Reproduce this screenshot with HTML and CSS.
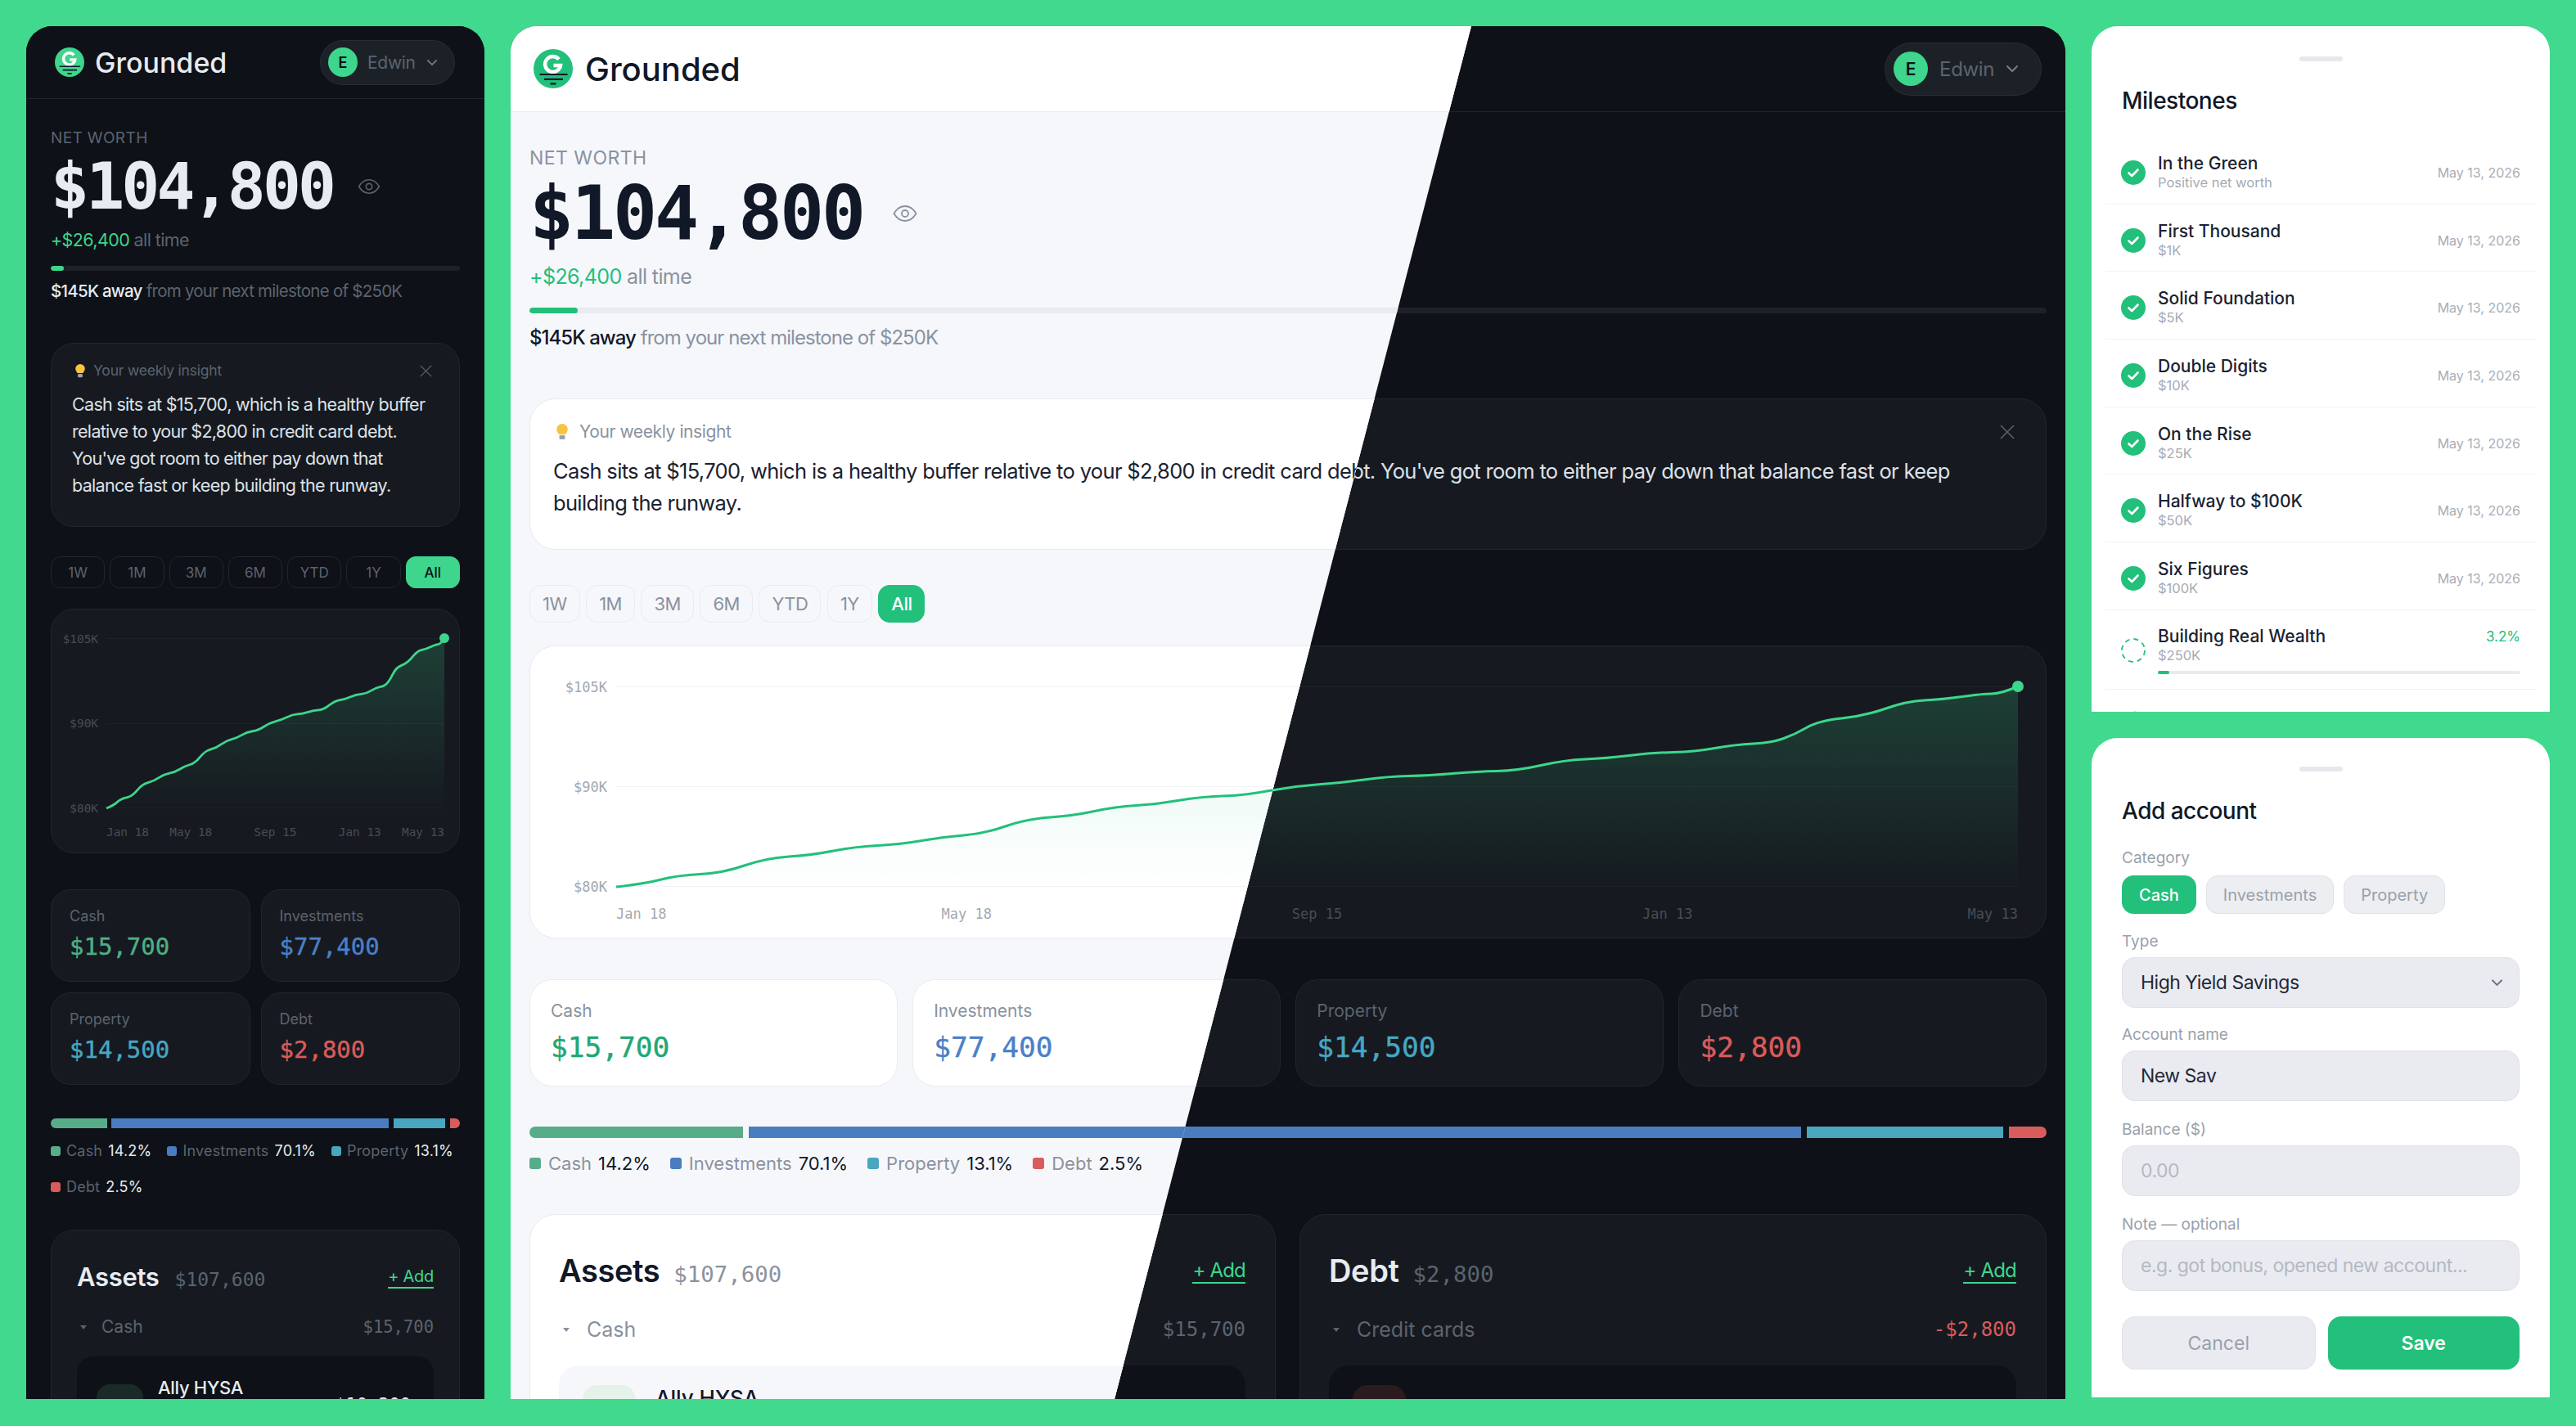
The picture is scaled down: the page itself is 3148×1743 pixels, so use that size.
FILE: index.html
```html
<!DOCTYPE html>
<html lang="en">
<head>
  <meta charset="UTF-8">
  <meta name="viewport" content="width=device-width, initial-scale=1.0">
  <title>Grounded</title>
  <link rel="stylesheet" href="styles.css">
</head>
<body>
  <svg class="defs" width="0" height="0" aria-hidden="true">
    <defs>
      <linearGradient id="fade-dark" x1="0" y1="0" x2="0" y2="1">
        <stop offset="0" stop-color="#3dd68c" stop-opacity="0.2"/>
        <stop offset="1" stop-color="#3dd68c" stop-opacity="0"/>
      </linearGradient>
      <linearGradient id="fade-light" x1="0" y1="0" x2="0" y2="1">
        <stop offset="0" stop-color="#22c07a" stop-opacity="0.14"/>
        <stop offset="1" stop-color="#22c07a" stop-opacity="0"/>
      </linearGradient>
      <path id="net-line" fill="none" vector-effect="non-scaling-stroke" d="M0 245 Q36 241 55 236 Q74 231 102.5 229.5 Q131 228 156.5 219 Q182 210 211 208 Q240 206 265.5 201 Q291 196 319.5 194.5 Q348 193 373.5 188.5 Q399 184 424.5 182 Q450 180 475.5 171 Q501 162 530 160 Q559 158 584.5 152.5 Q610 147 635.5 145.5 Q661 144 686.5 139.5 Q712 135 740.5 134 Q769 133 798 127.5 Q827 122 856 120 Q885 118 914 114 Q943 110 968 109.5 Q993 109 1022 106.5 Q1051 104 1076 103.5 Q1101 103 1130 96.5 Q1159 90 1184 89 Q1209 88 1238 84.5 Q1267 81 1292 80.5 Q1317 80 1342.5 75.5 Q1368 71 1389.5 70 Q1411 69 1425.5 64 Q1440 59 1454.5 50.5 Q1469 42 1497.5 39 Q1526 36 1551.5 27 Q1577 18 1598.5 17 Q1620 16 1645 12.5 Q1670 9 1681 9 Q1692 9 1713 0"/>
      <path id="net-area" d="M0 245 Q36 241 55 236 Q74 231 102.5 229.5 Q131 228 156.5 219 Q182 210 211 208 Q240 206 265.5 201 Q291 196 319.5 194.5 Q348 193 373.5 188.5 Q399 184 424.5 182 Q450 180 475.5 171 Q501 162 530 160 Q559 158 584.5 152.5 Q610 147 635.5 145.5 Q661 144 686.5 139.5 Q712 135 740.5 134 Q769 133 798 127.5 Q827 122 856 120 Q885 118 914 114 Q943 110 968 109.5 Q993 109 1022 106.5 Q1051 104 1076 103.5 Q1101 103 1130 96.5 Q1159 90 1184 89 Q1209 88 1238 84.5 Q1267 81 1292 80.5 Q1317 80 1342.5 75.5 Q1368 71 1389.5 70 Q1411 69 1425.5 64 Q1440 59 1454.5 50.5 Q1469 42 1497.5 39 Q1526 36 1551.5 27 Q1577 18 1598.5 17 Q1620 16 1645 12.5 Q1670 9 1681 9 Q1692 9 1713 0 L1713 245 Z"/>
      <symbol id="logo" viewBox="0 0 48 48">
        <circle class="logo-disc" cx="24" cy="24" r="24"/>
        <path class="logo-g" d="M31 12.5 A9.5 9.5 0 1 0 33 20 L24.5 20"/>
        <path class="logo-ground" d="M7.5 31H41.5M13 36.8H36M20.5 42.4H27.5"/>
      </symbol>
      <symbol id="eye" viewBox="0 0 30 24">
        <path d="M1.5 12C5 6 9.5 3 15 3s10 3 13.500 9c-3.500 6-8 9-13.500 9S5 18 1.500 12Z"/>
        <circle cx="15" cy="12" r="4"/>
      </symbol>
      <symbol id="bulb" viewBox="0 0 14 20">
        <path fill="#f7c340" d="M7 0a6.800 6.800 0 0 1 6.800 6.800c0 2.600-1.800 4-2.700 6.200H2.900C2 10.800.2 9.400.2 6.800A6.800 6.800 0 0 1 7 0Z"/>
        <rect fill="#9aa1ac" x="3.500" y="14" width="7" height="5" rx="1.500"/>
      </symbol>
      <symbol id="check" viewBox="0 0 30 30">
        <circle fill="#22c07a" cx="15" cy="15" r="15"/>
        <path fill="none" stroke="#fff" stroke-width="2.600" stroke-linecap="round" stroke-linejoin="round" d="M9.500 15.500l3.800 3.500 7.200-7.500"/>
      </symbol>
    </defs>
  </svg>

  <main class="board">
    <section class="panel phone">
      <div class="dash theme-dark">
        <header class="topbar">
          <div class="brand"><svg class="logo"><use href="#logo"/></svg><span class="brand-name">Grounded</span></div>
          <div class="user-chip">
            <span class="avatar">E</span><span class="user-name">Edwin</span>
            <svg class="chevron" viewBox="0 0 16 10"><path d="M1.500 1.500L8 8l6.500-6.500"/></svg>
          </div>
        </header>
        <div class="content">
          <div class="eyebrow">NET WORTH</div>
          <div class="worth-row">
            <span class="worth">$104,800</span>
            <svg class="eye"><use href="#eye"/></svg>
          </div>
          <div class="delta"><span class="delta-up">+$26,400</span> all time</div>
          <div class="track"><div class="track-fill"></div></div>
          <div class="away"><strong>$145K away</strong> from your next milestone of $250K</div>

          <div class="insight">
            <div class="insight-head">
              <svg class="bulb"><use href="#bulb"/></svg>
              <span>Your weekly insight</span>
              <svg class="close" viewBox="0 0 18 18"><path d="M1 1l16 16M17 1L1 17"/></svg>
            </div>
            <p class="insight-text">Cash sits at $15,700, which is a healthy buffer relative to your $2,800 in credit card debt. You've got room to either pay down that balance fast or keep building the runway.</p>
          </div>

          <div class="ranges">
            <span class="range">1W</span><span class="range">1M</span><span class="range">3M</span><span class="range">6M</span><span class="range">YTD</span><span class="range">1Y</span><span class="range range-on">All</span>
          </div>

          <div class="chart">
            <div class="plot">
              <div class="gridlines">
                <div class="gridline"><span class="tick">$105K</span></div>
                <div class="gridline"><span class="tick">$90K</span></div>
                <div class="gridline"><span class="tick">$80K</span></div>
              </div>
              <svg class="plot-svg" viewBox="0 0 1713 245" preserveAspectRatio="none">
                <use href="#net-area" fill="url(#fade-dark)"/>
                <use href="#net-line" class="plot-line"/>
              </svg>
              <span class="plot-dot"></span>
            </div>
            <div class="xaxis">
              <span class="x-first">Jan 18</span><span class="x-q1">May 18</span><span class="x-q2">Sep 15</span><span class="x-q3">Jan 13</span><span class="x-last">May 13</span>
            </div>
          </div>

          <div class="stats">
            <div class="stat"><div class="stat-label">Cash</div><div class="stat-value c-cash">$15,700</div></div>
            <div class="stat"><div class="stat-label">Investments</div><div class="stat-value c-invest">$77,400</div></div>
            <div class="stat"><div class="stat-label">Property</div><div class="stat-value c-property">$14,500</div></div>
            <div class="stat"><div class="stat-label">Debt</div><div class="stat-value c-debt">$2,800</div></div>
          </div>

          <div class="alloc">
            <span class="seg bg-cash seg-cash"></span><span class="seg bg-invest seg-invest"></span><span class="seg bg-property seg-property"></span><span class="seg bg-debt seg-debt"></span>
          </div>
          <div class="legend">
            <span class="legend-item"><i class="swatch bg-cash"></i>Cash<b>14.2%</b></span>
            <span class="legend-item"><i class="swatch bg-invest"></i>Investments<b>70.1%</b></span>
            <span class="legend-item"><i class="swatch bg-property"></i>Property<b>13.1%</b></span>
            <span class="legend-item"><i class="swatch bg-debt"></i>Debt<b>2.5%</b></span>
          </div>

          <div class="ledgers">
            <div class="ledger">
              <div class="ledger-head">
                <h2 class="ledger-title">Assets</h2><span class="ledger-total">$107,600</span><a class="add-link" href="#">+ Add</a>
              </div>
              <div class="group-row"><i class="caret"></i><span class="group-name">Cash</span><span class="group-total">$15,700</span></div>
              <div class="account">
                <span class="account-icon"></span>
                <span class="account-name">Ally HYSA</span>
                <span class="account-amount">$10,300</span>
              </div>
            </div>
          </div>
        </div>
      </div>
    </section>

    <section class="panel wide">
      <div class="dash theme-dark">
        <header class="topbar">
          <div class="brand"><svg class="logo"><use href="#logo"/></svg><span class="brand-name">Grounded</span></div>
          <div class="user-chip">
            <span class="avatar">E</span><span class="user-name">Edwin</span>
            <svg class="chevron" viewBox="0 0 16 10"><path d="M1.500 1.500L8 8l6.500-6.500"/></svg>
          </div>
        </header>
        <div class="content">
          <div class="eyebrow">NET WORTH</div>
          <div class="worth-row">
            <span class="worth">$104,800</span>
            <svg class="eye"><use href="#eye"/></svg>
          </div>
          <div class="delta"><span class="delta-up">+$26,400</span> all time</div>
          <div class="track"><div class="track-fill"></div></div>
          <div class="away"><strong>$145K away</strong> from your next milestone of $250K</div>

          <div class="insight">
            <div class="insight-head">
              <svg class="bulb"><use href="#bulb"/></svg>
              <span>Your weekly insight</span>
              <svg class="close" viewBox="0 0 18 18"><path d="M1 1l16 16M17 1L1 17"/></svg>
            </div>
            <p class="insight-text">Cash sits at $15,700, which is a healthy buffer relative to your $2,800 in credit card debt. You've got room to either pay down that balance fast or keep building the runway.</p>
          </div>

          <div class="ranges">
            <span class="range">1W</span><span class="range">1M</span><span class="range">3M</span><span class="range">6M</span><span class="range">YTD</span><span class="range">1Y</span><span class="range range-on">All</span>
          </div>

          <div class="chart">
            <div class="plot">
              <div class="gridlines">
                <div class="gridline"><span class="tick">$105K</span></div>
                <div class="gridline"><span class="tick">$90K</span></div>
                <div class="gridline"><span class="tick">$80K</span></div>
              </div>
              <svg class="plot-svg" viewBox="0 0 1713 245" preserveAspectRatio="none">
                <use href="#net-area" fill="url(#fade-dark)"/>
                <use href="#net-line" class="plot-line"/>
              </svg>
              <span class="plot-dot"></span>
            </div>
            <div class="xaxis">
              <span class="x-first">Jan 18</span><span class="x-q1">May 18</span><span class="x-q2">Sep 15</span><span class="x-q3">Jan 13</span><span class="x-last">May 13</span>
            </div>
          </div>

          <div class="stats">
            <div class="stat"><div class="stat-label">Cash</div><div class="stat-value c-cash">$15,700</div></div>
            <div class="stat"><div class="stat-label">Investments</div><div class="stat-value c-invest">$77,400</div></div>
            <div class="stat"><div class="stat-label">Property</div><div class="stat-value c-property">$14,500</div></div>
            <div class="stat"><div class="stat-label">Debt</div><div class="stat-value c-debt">$2,800</div></div>
          </div>

          <div class="alloc">
            <span class="seg bg-cash seg-cash"></span><span class="seg bg-invest seg-invest"></span><span class="seg bg-property seg-property"></span><span class="seg bg-debt seg-debt"></span>
          </div>
          <div class="legend">
            <span class="legend-item"><i class="swatch bg-cash"></i>Cash<b>14.2%</b></span>
            <span class="legend-item"><i class="swatch bg-invest"></i>Investments<b>70.1%</b></span>
            <span class="legend-item"><i class="swatch bg-property"></i>Property<b>13.1%</b></span>
            <span class="legend-item"><i class="swatch bg-debt"></i>Debt<b>2.5%</b></span>
          </div>

          <div class="ledgers">
            <div class="ledger">
              <div class="ledger-head">
                <h2 class="ledger-title">Assets</h2><span class="ledger-total">$107,600</span><a class="add-link" href="#">+ Add</a>
              </div>
              <div class="group-row"><i class="caret"></i><span class="group-name">Cash</span><span class="group-total">$15,700</span></div>
              <div class="account">
                <span class="account-icon"></span>
                <span class="account-name">Ally HYSA</span>
              </div>
            </div>
            <div class="ledger">
              <div class="ledger-head">
                <h2 class="ledger-title">Debt</h2><span class="ledger-total">$2,800</span><a class="add-link" href="#">+ Add</a>
              </div>
              <div class="group-row"><i class="caret"></i><span class="group-name">Credit cards</span><span class="group-total c-debt">-$2,800</span></div>
              <div class="account">
                <span class="account-icon account-icon-debt"></span>
              </div>
            </div>
          </div>
        </div>
      </div>

      <!-- same page in the light theme, cut along the diagonal -->
      <div class="dash theme-light wipe">
        <header class="topbar">
          <div class="brand"><svg class="logo"><use href="#logo"/></svg><span class="brand-name">Grounded</span></div>
        </header>
        <div class="content">
          <div class="eyebrow">NET WORTH</div>
          <div class="worth-row">
            <span class="worth">$104,800</span>
            <svg class="eye"><use href="#eye"/></svg>
          </div>
          <div class="delta"><span class="delta-up">+$26,400</span> all time</div>
          <div class="track"><div class="track-fill"></div></div>
          <div class="away"><strong>$145K away</strong> from your next milestone of $250K</div>

          <div class="insight">
            <div class="insight-head">
              <svg class="bulb"><use href="#bulb"/></svg>
              <span>Your weekly insight</span>
              <svg class="close" viewBox="0 0 18 18"><path d="M1 1l16 16M17 1L1 17"/></svg>
            </div>
            <p class="insight-text">Cash sits at $15,700, which is a healthy buffer relative to your $2,800 in credit card debt. You've got room to either pay down that balance fast or keep building the runway.</p>
          </div>

          <div class="ranges">
            <span class="range">1W</span><span class="range">1M</span><span class="range">3M</span><span class="range">6M</span><span class="range">YTD</span><span class="range">1Y</span><span class="range range-on">All</span>
          </div>

          <div class="chart">
            <div class="plot">
              <div class="gridlines">
                <div class="gridline"><span class="tick">$105K</span></div>
                <div class="gridline"><span class="tick">$90K</span></div>
                <div class="gridline"><span class="tick">$80K</span></div>
              </div>
              <svg class="plot-svg" viewBox="0 0 1713 245" preserveAspectRatio="none">
                <use href="#net-area" fill="url(#fade-light)"/>
                <use href="#net-line" class="plot-line"/>
              </svg>
            </div>
            <div class="xaxis">
              <span class="x-first">Jan 18</span><span class="x-q1">May 18</span><span class="x-q2">Sep 15</span><span class="x-q3">Jan 13</span><span class="x-last">May 13</span>
            </div>
          </div>

          <div class="stats">
            <div class="stat"><div class="stat-label">Cash</div><div class="stat-value c-cash">$15,700</div></div>
            <div class="stat"><div class="stat-label">Investments</div><div class="stat-value c-invest">$77,400</div></div>
            <div class="stat"><div class="stat-label">Property</div><div class="stat-value c-property">$14,500</div></div>
            <div class="stat"><div class="stat-label">Debt</div><div class="stat-value c-debt">$2,800</div></div>
          </div>

          <div class="alloc">
            <span class="seg bg-cash seg-cash"></span><span class="seg bg-invest seg-invest"></span><span class="seg bg-property seg-property"></span><span class="seg bg-debt seg-debt"></span>
          </div>
          <div class="legend">
            <span class="legend-item"><i class="swatch bg-cash"></i>Cash<b>14.2%</b></span>
            <span class="legend-item"><i class="swatch bg-invest"></i>Investments<b>70.1%</b></span>
            <span class="legend-item"><i class="swatch bg-property"></i>Property<b>13.1%</b></span>
            <span class="legend-item"><i class="swatch bg-debt"></i>Debt<b>2.5%</b></span>
          </div>

          <div class="ledgers">
            <div class="ledger">
              <div class="ledger-head">
                <h2 class="ledger-title">Assets</h2><span class="ledger-total">$107,600</span><a class="add-link" href="#">+ Add</a>
              </div>
              <div class="group-row"><i class="caret"></i><span class="group-name">Cash</span><span class="group-total">$15,700</span></div>
              <div class="account">
                <span class="account-icon"></span>
                <span class="account-name">Ally HYSA</span>
              </div>
            </div>
          </div>
        </div>
      </div>
    </section>

    <aside class="sheets">
      <section class="sheet sheet-milestones">
        <div class="handle"></div>
        <h2 class="sheet-title">Milestones</h2>
        <ul class="milestones">
          <li class="milestone"><svg class="tick-icon"><use href="#check"/></svg><div class="ms-text"><div class="ms-name">In the Green</div><div class="ms-sub">Positive net worth</div></div><span class="ms-date">May 13, 2026</span></li>
          <li class="milestone"><svg class="tick-icon"><use href="#check"/></svg><div class="ms-text"><div class="ms-name">First Thousand</div><div class="ms-sub">$1K</div></div><span class="ms-date">May 13, 2026</span></li>
          <li class="milestone"><svg class="tick-icon"><use href="#check"/></svg><div class="ms-text"><div class="ms-name">Solid Foundation</div><div class="ms-sub">$5K</div></div><span class="ms-date">May 13, 2026</span></li>
          <li class="milestone"><svg class="tick-icon"><use href="#check"/></svg><div class="ms-text"><div class="ms-name">Double Digits</div><div class="ms-sub">$10K</div></div><span class="ms-date">May 13, 2026</span></li>
          <li class="milestone"><svg class="tick-icon"><use href="#check"/></svg><div class="ms-text"><div class="ms-name">On the Rise</div><div class="ms-sub">$25K</div></div><span class="ms-date">May 13, 2026</span></li>
          <li class="milestone"><svg class="tick-icon"><use href="#check"/></svg><div class="ms-text"><div class="ms-name">Halfway to $100K</div><div class="ms-sub">$50K</div></div><span class="ms-date">May 13, 2026</span></li>
          <li class="milestone"><svg class="tick-icon"><use href="#check"/></svg><div class="ms-text"><div class="ms-name">Six Figures</div><div class="ms-sub">$100K</div></div><span class="ms-date">May 13, 2026</span></li>
          <li class="milestone milestone-next">
            <svg class="tick-icon" viewBox="0 0 30 30"><circle class="dash-ring" cx="15" cy="15" r="14"/></svg>
            <div class="ms-text">
              <div class="ms-top"><span class="ms-name">Building Real Wealth</span><span class="ms-pct">3.2%</span></div>
              <div class="ms-sub">$250K</div>
              <div class="ms-track"><div class="ms-fill"></div></div>
            </div>
          </li>
          <li class="milestone milestone-later"><svg class="tick-icon" viewBox="0 0 30 30"><circle class="dash-ring ring-faint" cx="15" cy="15" r="14"/></svg><div class="ms-text"><div class="ms-name ms-faint">Half a Million</div><div class="ms-sub">$500K</div></div></li>
        </ul>
      </section>

      <section class="sheet sheet-form">
        <div class="handle"></div>
        <h2 class="sheet-title">Add account</h2>
        <div class="field field-first">
          <label class="field-label">Category</label>
          <div class="cat-chips"><span class="cat-chip cat-chip-on">Cash</span><span class="cat-chip">Investments</span><span class="cat-chip">Property</span></div>
        </div>
        <div class="field field-type">
          <label class="field-label">Type</label>
          <div class="select-wrap">
            <select class="control"><option>High Yield Savings</option></select>
            <svg class="select-arrow" viewBox="0 0 16 10"><path d="M1.500 1.500L8 8l6.500-6.500"/></svg>
          </div>
        </div>
        <div class="field">
          <label class="field-label">Account name</label>
          <input class="control" type="text" value="New Sav">
        </div>
        <div class="field field-loose">
          <label class="field-label">Balance ($)</label>
          <input class="control" type="text" placeholder="0.00">
        </div>
        <div class="field field-loose">
          <label class="field-label">Note — optional</label>
          <input class="control" type="text" placeholder="e.g. got bonus, opened new account...">
        </div>
        <div class="form-actions">
          <button class="btn btn-cancel">Cancel</button>
          <button class="btn btn-save">Save</button>
        </div>
      </section>
    </aside>
  </main>
</body>
</html>
```

FILE: styles.css
```css
* { margin: 0; padding: 0; box-sizing: border-box; }
html, body { height: 100%; overflow: hidden; }
body { font-family: Inter, "Noto Sans", sans-serif; background: #40d98d; color: #111827; }
.defs { position: absolute; }
ul { list-style: none; }
a { text-decoration: none; }

.board {
  display: grid;
  grid-template-columns: 560px 1900px 560px;
  gap: 32px;
  padding: 32px 32px 33px;
  height: 100%;
}

/* themes */
.theme-dark {
  --bg: #0e1117;
  --head: #0e1117;
  --card: #161a20;
  --line: #21262d;
  --grid: #1e2329;
  --text: #e8ebf0;
  --body: #dde1e7;
  --muted: #5c636e;
  --tick: #464c55;
  --accent: #3dd68c;
  --on-accent: #0e1117;
  --track: #1c2228;
  --inset: #0e1117;
  --icon: #1a2a26;
  --cash: #4fae85;
  --invest: #4a80c8;
  --property: #47a6c2;
  --debt: #dc5a5a;
}
.theme-light {
  --bg: #f6f7fb;
  --head: #fff;
  --card: #fff;
  --line: #e9ebf0;
  --grid: #f1f2f5;
  --text: #111827;
  --body: #1a2230;
  --muted: #8a92a0;
  --tick: #a4a9b1;
  --accent: #22c07a;
  --on-accent: #fff;
  --track: #e9ebf0;
  --inset: #f6f7fb;
  --icon: #e4f2ea;
  --cash: #20a874;
  --invest: #4a80c8;
  --property: #47a6c2;
  --debt: #dc5a5a;
}

/* panels */
.panel { position: relative; overflow: hidden; border-radius: 32px 32px 0 0; min-height: 0; }
.dash { height: 100%; background: var(--bg); color: var(--text); }
.wipe { position: absolute; inset: 0; clip-path: polygon(0 0, 1174px 0, 738px 100%, 0 100%); }

.topbar {
  display: flex;
  justify-content: space-between;
  align-items: center;
  background: var(--head);
  border-bottom: 1px solid var(--line);
}
.brand { display: flex; align-items: center; }
.logo { display: block; }
.logo-disc { fill: var(--accent); }
.logo-g { fill: none; stroke: #fff; stroke-width: 4.5; }
.logo-ground { fill: none; stroke: #10192b; stroke-width: 2.2; }
.brand-name { font-weight: 500; }
.user-chip {
  display: flex;
  align-items: center;
  background: #1c2128;
  border: 1px solid #282e36;
  border-radius: 40px;
}
.avatar {
  display: flex;
  align-items: center;
  justify-content: center;
  border-radius: 50%;
  background: var(--accent);
  color: var(--on-accent);
  font-weight: 600;
}
.user-name { color: #5c636e; letter-spacing: -0.3px; }
.chevron { fill: none; stroke: #777e88; stroke-width: 2; }

.eyebrow { color: var(--muted); letter-spacing: 0.02em; }
.worth-row { display: flex; align-items: center; }
.worth { font-family: "DejaVu Sans Mono", monospace; font-weight: 700; }
.eye { fill: none; stroke: var(--muted); stroke-width: 1.800; }
.delta { color: var(--muted); }
.delta-up { color: var(--accent); }
.track { background: var(--track); border-radius: 4px; overflow: hidden; }
.track-fill { height: 100%; background: var(--accent); border-radius: 4px; width: 3.200%; }
.away { color: var(--muted); }
.away strong { color: var(--text); font-weight: 500; }

.insight { background: var(--card); border: 1px solid var(--line); }
.insight-head { display: flex; align-items: center; color: var(--muted); }
.close { margin-left: auto; fill: none; stroke: var(--muted); stroke-width: 1.500; }
.insight-text { color: var(--body); }

.ranges { display: flex; }
.range {
  display: flex;
  align-items: center;
  justify-content: center;
  border: 1px solid var(--line);
  color: var(--muted);
}
.range-on { background: var(--accent); border-color: var(--accent); color: var(--on-accent); font-weight: 500; }

.chart { background: var(--card); border: 1px solid var(--line); }
.plot { position: relative; }
.gridlines {
  position: absolute;
  inset: 0;
  display: flex;
  flex-direction: column;
  justify-content: space-between;
}
.gridline { position: relative; height: 1px; background: var(--grid); }
.tick {
  position: absolute;
  top: 50%;
  transform: translateY(-50%);
  color: var(--tick);
  font-family: "DejaVu Sans Mono", monospace;
  white-space: nowrap;
}
.plot-svg { position: absolute; inset: 0; width: 100%; height: 100%; overflow: visible; }
.plot-line { stroke: var(--accent); }
.plot-dot { position: absolute; top: 0; right: 0; border-radius: 50%; background: var(--accent); transform: translate(50%, -50%); }
.xaxis { position: relative; color: var(--tick); font-family: "DejaVu Sans Mono", monospace; }
.xaxis span { position: absolute; top: 0; white-space: nowrap; }
.x-first { left: 0; }
.x-q1 { left: 25%; transform: translateX(-50%); }
.x-q2 { left: 50%; transform: translateX(-50%); }
.x-q3 { left: 75%; transform: translateX(-50%); }
.x-last { right: 0; }

.stats { display: grid; }
.stat { background: var(--card); border: 1px solid var(--line); }
.stat-label { color: var(--muted); }
.stat-value { font-family: "DejaVu Sans Mono", monospace; -webkit-text-stroke: 0.4px currentColor; }
.c-cash { color: var(--cash); }
.c-invest { color: var(--invest); }
.c-property { color: var(--property); }
.c-debt { color: var(--debt); }
.bg-cash { background: #57ad8a; }
.bg-invest { background: #4a7cc0; }
.bg-property { background: #48a6bf; }
.bg-debt { background: #d95c5c; }

.alloc { display: flex; overflow: hidden; }
.seg { display: block; }
.seg-cash { flex: 14.2; }
.seg-invest { flex: 70.1; }
.seg-property { flex: 13.1; }
.seg-debt { flex: 2.5; }
.legend { display: flex; flex-wrap: wrap; color: var(--muted); }
.legend-item { display: flex; align-items: center; white-space: nowrap; }
.legend-item b { color: var(--text); font-weight: 400; }
.swatch { display: block; }

.ledgers { display: grid; }
.ledger { background: var(--card); border: 1px solid var(--line); overflow: hidden; }
.ledger-head { display: flex; align-items: baseline; }
.ledger-title { font-weight: 600; letter-spacing: -0.01em; color: var(--text); }
.ledger-total { color: var(--muted); font-family: "DejaVu Sans Mono", monospace; }
.add-link { align-self: flex-start; margin-left: auto; color: var(--accent); border-bottom: 2px solid var(--accent); }
.group-row { display: flex; align-items: center; color: var(--muted); }
.caret {
  display: block;
  border-left: 4px solid transparent;
  border-right: 4px solid transparent;
  border-top: 5px solid var(--muted);
}
.group-total { margin-left: auto; font-family: "DejaVu Sans Mono", monospace; }
.account { display: flex; align-items: flex-start; background: var(--inset); }
.account-icon { display: block; background: var(--icon); }
.account-icon-debt { background: #2b1b1f; }
.account-name { font-weight: 500; color: var(--text); }
.account-amount { margin-left: auto; font-family: "DejaVu Sans Mono", monospace; color: var(--text); }

/* wide layout */
.wide .topbar { height: 105px; padding: 0 29px 0 28px; }
.wide .logo { width: 48px; height: 48px; }
.wide .brand-name { margin-left: 15px; font-size: 40px; }
.wide .user-chip { height: 65px; width: 192px; padding-left: 10px; }
.wide .avatar { width: 42px; height: 42px; font-size: 21px; }
.wide .user-name { margin-left: 14px; font-size: 24px; }
.wide .chevron { width: 16px; height: 10px; margin-left: 14px; }
.wide .content { padding: 44px 23px 0; }
.wide .eyebrow { font-size: 23px; line-height: 24px; }
.wide .worth-row { height: 90px; margin-top: 11px; }
.wide .worth { font-size: 90px; line-height: 90px; letter-spacing: -3.200px; }
.wide .eye { width: 30px; height: 24px; margin-left: 36px; }
.wide .delta { margin-top: 16px; font-size: 25px; line-height: 32px; letter-spacing: -0.600px; }
.wide .track { margin-top: 22px; height: 7px; }
.wide .away { margin-top: 15px; font-size: 24px; line-height: 30px; letter-spacing: -0.960px; }
.wide .insight { margin-top: 59px; height: 185px; border-radius: 32px; padding: 27px 38px 0 28px; }
.wide .insight-head { font-size: 21px; line-height: 26px; letter-spacing: -0.400px; }
.wide .bulb { width: 14px; height: 20px; margin: 0 14px 0 4px; }
.wide .close { width: 18px; height: 18px; }
.wide .insight-text { margin-top: 15px; font-size: 25.500px; line-height: 39px; letter-spacing: -0.660px; }
.wide .ranges { margin-top: 43px; gap: 7.500px; }
.wide .range { height: 46px; padding: 0 15px; border-radius: 14px; font-size: 22px; letter-spacing: -0.500px; }
.wide .chart { margin-top: 28px; height: 358px; border-radius: 32px; padding: 49px 34px 0 105px; }
.wide .plot { height: 245px; }
.wide .tick { right: calc(100% + 11px); font-size: 17px; }
.wide .plot-line { stroke-width: 3; }
.wide .plot-dot { width: 14px; height: 14px; }
.wide .xaxis { margin-top: 23px; height: 20px; font-size: 17px; line-height: 20px; }
.wide .stats { margin-top: 50px; grid-template-columns: repeat(4, 1fr); gap: 18.500px; }
.wide .stat { height: 131px; border-radius: 28px; padding: 24px 25px 0; }
.wide .stat-label { font-size: 21px; line-height: 28px; }
.wide .stat-value { margin-top: 8px; font-size: 34.500px; line-height: 44px; }
.wide .alloc { margin-top: 49px; height: 14px; gap: 7px; border-radius: 7px; }
.wide .legend { margin-top: 17px; gap: 24px; font-size: 22px; line-height: 28px; }
.wide .legend-item b { margin-left: 8px; }
.wide .swatch { width: 14px; height: 14px; margin-right: 9px; border-radius: 3px; }
.wide .ledgers { margin-top: 48px; grid-template-columns: 912px 913px; gap: 29px; }
.wide .ledger { height: 300px; border-radius: 32px; padding: 45px 36px 0 35px; }
.wide .ledger-title { font-size: 38px; line-height: 46px; }
.wide .ledger-total { margin-left: 17px; font-size: 27.400px; }
.wide .add-link { margin-top: 8px; font-size: 24px; line-height: 29px; letter-spacing: -0.800px; }
.wide .group-row { margin-top: 33px; font-size: 25px; line-height: 32px; }
.wide .caret { margin: 0 21px 0 5px; }
.wide .group-total { font-size: 24px; }
.wide .account { margin-top: 28px; height: 120px; padding: 24px 29px; border-radius: 24px; }
.wide .account-icon { width: 65px; height: 60px; border-radius: 18px; margin-right: 24px; }
.wide .account-name { font-size: 26px; line-height: 32px; }

/* phone layout */
.phone .topbar { height: 89px; padding: 0 36px 0 35px; }
.phone .logo { width: 36px; height: 36px; }
.phone .brand-name { margin-left: 13px; font-size: 34px; }
.phone .user-chip { height: 55px; width: 165px; padding-left: 9px; }
.phone .avatar { width: 36px; height: 36px; font-size: 18px; }
.phone .user-name { margin-left: 12px; font-size: 21px; }
.phone .chevron { width: 14px; height: 9px; margin-left: 13px; }
.phone .content { padding: 38px 30px 0; }
.phone .eyebrow { font-size: 19px; line-height: 20px; }
.phone .worth-row { height: 74px; margin-top: 12px; }
.phone .worth { font-size: 78px; line-height: 74px; letter-spacing: -3.800px; }
.phone .eye { width: 28px; height: 22px; margin-left: 30px; }
.phone .delta { margin-top: 14px; font-size: 21.500px; line-height: 28px; letter-spacing: -0.600px; }
.phone .track { margin-top: 18px; height: 6px; }
.phone .away { margin-top: 12px; font-size: 20.500px; line-height: 26px; letter-spacing: -0.750px; white-space: nowrap; }
.phone .insight { margin-top: 50px; height: 225px; border-radius: 28px; padding: 22px 25px 0; }
.phone .insight-head { font-size: 17.500px; line-height: 22px; letter-spacing: -0.200px; }
.phone .bulb { width: 12px; height: 17px; margin: 0 10px 0 4px; }
.phone .close { width: 15px; height: 15px; margin-right: 8px; }
.phone .insight-text { margin-top: 14px; font-size: 21.500px; line-height: 33px; letter-spacing: -0.700px; }
.phone .ranges { margin-top: 36px; gap: 6px; }
.phone .range { flex: 1; height: 39px; border-radius: 12px; font-size: 17px; }
.phone .chart { margin-top: 25px; height: 299px; border-radius: 28px; padding: 35px 18px 0 67px; }
.phone .plot { height: 208px; }
.phone .tick { right: calc(100% + 10px); font-size: 14.400px; }
.phone .plot-line { stroke-width: 2.800; }
.phone .plot-dot { width: 12px; height: 12px; }
.phone .xaxis { margin-top: 21px; height: 16px; font-size: 14.400px; line-height: 16px; }
.phone .stats { margin-top: 44px; grid-template-columns: 1fr 1fr; gap: 13px; }
.phone .stat { height: 113px; border-radius: 24px; padding: 20px 22px 0; }
.phone .stat-label { font-size: 18px; line-height: 24px; }
.phone .stat-value { margin-top: 6px; font-size: 29px; line-height: 38px; }
.phone .alloc { margin-top: 41px; height: 12px; gap: 5.500px; border-radius: 6px; }
.phone .legend { margin-top: 16px; gap: 20px 19px; font-size: 18px; line-height: 24px; letter-spacing: 0.200px; }
.phone .legend-item b { margin-left: 7px; }
.phone .swatch { width: 12px; height: 12px; margin-right: 7px; border-radius: 3px; }
.phone .ledgers { margin-top: 40px; }
.phone .ledger { height: 300px; border-radius: 28px; padding: 37px 31px 0 31px; }
.phone .ledger-title { font-size: 31px; line-height: 40px; }
.phone .ledger-total { margin-left: 19px; font-size: 23px; }
.phone .add-link { margin-top: 7px; font-size: 20px; line-height: 25px; letter-spacing: -0.300px; }
.phone .group-row { margin-top: 27px; font-size: 21px; line-height: 28px; }
.phone .caret { margin: 0 18px 0 4px; }
.phone .group-total { font-size: 20.500px; }
.phone .account { margin-top: 22px; height: 120px; padding: 24px 28px 0 24px; border-radius: 20px; }
.phone .account-icon { width: 57px; height: 57px; margin-top: 10px; border-radius: 16px; margin-right: 18px; }
.phone .account-name { font-size: 22px; line-height: 28px; letter-spacing: -0.300px; }
.phone .account-amount { margin-top: 22px; font-size: 22px; line-height: 26px; }

/* right column sheets */
.sheets { display: flex; flex-direction: column; gap: 32px; min-height: 0; }
.sheet { background: #fff; border-radius: 32px 32px 0 0; overflow: hidden; padding: 37px 37px 0; }
.sheet-milestones { height: 838px; }
.sheet-form { height: 806px; padding-top: 35px; }
.handle { width: 53px; height: 6px; margin: 0 auto; border-radius: 3px; background: #e6e8ec; }
.sheet-title { margin-top: 30px; font-size: 28px; line-height: 36px; letter-spacing: -0.500px; font-weight: 500; color: #111827; }

.milestones { margin: 26px -20px 0; }
.milestone {
  display: flex;
  align-items: center;
  height: 82.700px;
  padding: 6px 19px 0;
  border-bottom: 1px solid #f1f2f5;
}
.tick-icon { flex: none; width: 30px; height: 30px; }
.ms-text { flex: 1; margin-left: 15px; min-width: 0; }
.ms-name { font-size: 21px; line-height: 24px; font-weight: 500; color: #1a2230; }
.ms-faint { color: #c9cdd3; }
.ms-sub { font-size: 16.500px; line-height: 22px; color: #a5abb5; }
.ms-date { font-size: 16px; color: #a9aeb6; }
.dash-ring { fill: none; stroke: #22c07a; stroke-width: 1.800; stroke-dasharray: 6 5; }
.ring-faint { stroke: #d6d9de; }
.milestone-next { align-items: flex-start; height: 97px; padding-top: 20px; }
.milestone-next .tick-icon { margin-top: 14px; }
.milestone-later { align-items: flex-start; padding-top: 26px; }
.ms-top { display: flex; justify-content: space-between; }
.ms-pct { font-size: 17px; line-height: 24px; color: #22c07a; }
.ms-track { height: 4px; margin-top: 8px; background: #e9ebf0; border-radius: 2px; }
.ms-fill { height: 100%; width: 3.200%; background: #22c07a; border-radius: 2px; }

.field { margin-top: 22px; }
.field-first { margin-top: 29px; }
.field-first .field-label { margin-bottom: 10px; }
.field-type { margin-top: 23px; }
.field-loose { margin-top: 24px; }
.field-label { display: block; margin-bottom: 8px; font-size: 19px; line-height: 22px; color: #9aa1ac; }
.cat-chips { display: flex; gap: 12px; }
.cat-chip {
  display: flex;
  align-items: center;
  height: 47px;
  padding: 0 20px;
  background: #eceef2;
  border: 1px solid #dfe2e8;
  border-radius: 14px;
  font-size: 20px;
  color: #9aa1ac;
}
.cat-chip-on { background: #22c07a; border-color: #22c07a; color: #fff; font-weight: 500; }
.control {
  display: block;
  width: 100%;
  height: 62px;
  padding: 0 22px;
  background: #e9ebf0;
  border: 1px solid #dfe2e8;
  border-radius: 16px;
  font: 23px Inter, "Noto Sans", sans-serif;
  letter-spacing: -0.500px;
  color: #1f2937;
  outline: none;
  appearance: none;
}
.control::placeholder { color: #b4b9c3; opacity: 1; }
.select-wrap { position: relative; }
.select-arrow {
  position: absolute;
  right: 20px;
  top: 26px;
  width: 15px;
  height: 10px;
  fill: none;
  stroke: #6b7280;
  stroke-width: 2;
}
.form-actions { display: flex; gap: 15px; margin-top: 31px; }
.btn { flex: 1; height: 65px; border-radius: 16px; font: 23px Inter, "Noto Sans", sans-serif; }
.btn-cancel { background: #e9ebf0; border: 1px solid #dfe2e8; color: #9aa1ac; }
.btn-save { background: #22c07a; border: none; color: #fff; font-weight: 600; }
```
